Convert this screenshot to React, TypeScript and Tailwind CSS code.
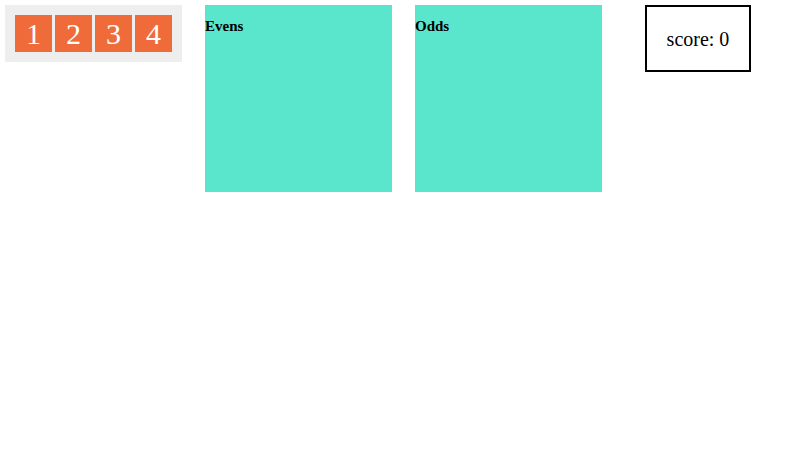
import React from 'react';

const tiles = ['1', '2', '3', '4'];

export default function App() {
  return (
    <div className="flex items-start p-[5px] font-['Liberation_Serif',serif] text-black">
      <div className="flex gap-[3px] bg-[#eeeeee] p-[10px]">
        {tiles.map((t) => (
          <div
            key={t}
            className="flex h-[37px] w-[37px] items-center justify-center bg-[#ef6c3a] text-[30px] leading-none text-white"
          >
            {t}
          </div>
        ))}
      </div>
      <div className="ml-[23px] h-[187px] w-[187px] bg-[#5ae6cd]">
        <div className="pt-[13px] text-[15px] font-bold leading-[17px]">Evens</div>
      </div>
      <div className="ml-[23px] h-[187px] w-[187px] bg-[#5ae6cd]">
        <div className="pt-[13px] text-[15px] font-bold leading-[17px]">Odds</div>
      </div>
      <div className="ml-[43px] flex h-[67px] w-[106px] items-center justify-center border-2 border-black text-[20px]">
        score: 0
      </div>
    </div>
  );
}
